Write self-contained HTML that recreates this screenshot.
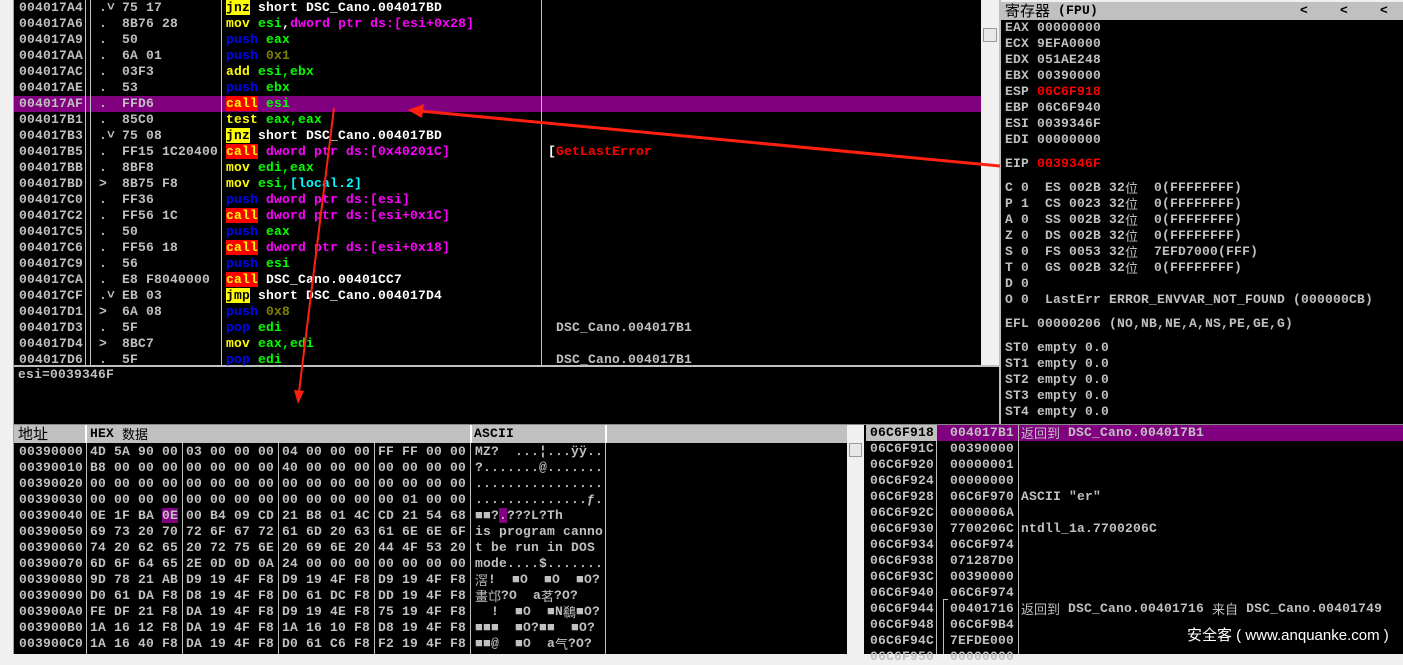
<!DOCTYPE html>
<html><head><meta charset="utf-8"><style>
*{margin:0;padding:0;box-sizing:border-box}
body{width:1403px;height:654px;overflow:hidden;background:#f0f0f0;position:relative;font-family:"Liberation Mono","Noto Sans CJK SC",monospace;font-size:13px;font-weight:bold;letter-spacing:0.2px;color:#c0c0c0}
.a{position:absolute}
.t{position:absolute;height:16px;line-height:16px;white-space:pre}
.blk{position:absolute;background:#000}
.vl{position:absolute;width:1px;background:#c0c0c0}
.y{color:#ffff00}.g{color:#00ff00}.m{color:#ff00ff}.b{color:#0000ff}.o{color:#808000}.w{color:#fff}.c{color:#00ffff}.r{color:#ff0000}
.yb{background:#ffff00;color:#000}.rb{background:#ff0000;color:#ffff00}
.hd{position:absolute;background:#c0c0c0;color:#000;height:18px;line-height:18px;white-space:pre}
.cj{font-family:"Noto Sans CJK SC","WenQuanYi Zen Hei",sans-serif;font-weight:normal;letter-spacing:0;line-height:16px;display:inline-block;height:16px;vertical-align:top}
</style></head><body>
<div class="a" style="left:13px;top:0;width:1px;height:654px;background:#a0a0a0"></div>
<div class="blk" style="left:14px;top:0;width:967px;height:365px"></div>
<div class="a" style="left:14px;top:96px;width:967px;height:16px;background:#800080"></div>
<div class="vl" style="left:85px;top:0;height:365px"></div>
<div class="vl" style="left:90px;top:0;height:365px"></div>
<div class="vl" style="left:221px;top:0;height:365px"></div>
<div class="vl" style="left:541px;top:0;height:365px"></div>
<div class="a" style="left:981px;top:0;width:18px;height:365px;background:#f0f0f0"></div>
<div class="a" style="left:983px;top:28px;width:14px;height:14px;background:#e8e8e8;border:1px solid #999"></div>
<div class="a" style="left:14px;top:365px;width:985px;height:2px;background:#c0c0c0"></div>
<div id="dis"></div>
<div class="blk" style="left:14px;top:367px;width:985px;height:57px"></div>
<div class="t" style="left:18px;top:367px">esi=0039346F</div>
<div class="a" style="left:999px;top:0;width:2px;height:424px;background:#c0c0c0"></div>
<div class="blk" style="left:1001px;top:19px;width:402px;height:405px"></div>
<div class="hd" style="left:1001px;top:2px;width:402px;padding-left:4px"><span class="cj" style="font-size:15px;height:18px;line-height:18px">寄存器</span> (FPU)</div>
<div class="t" style="left:1300px;top:3px;color:#000">&lt;</div>
<div class="t" style="left:1340px;top:3px;color:#000">&lt;</div>
<div class="t" style="left:1380px;top:3px;color:#000">&lt;</div>
<div id="reg"></div>
<div class="a" style="left:14px;top:424px;width:1389px;height:1px;background:#888"></div>
<div class="hd" style="left:14px;top:425px;width:833px"></div>
<div class="t" style="left:18px;top:426px;color:#000;height:18px"><span class="cj" style="font-size:15px">地址</span></div>
<div class="t" style="left:90px;top:426px;color:#000">HEX <span class="cj">数据</span></div>
<div class="t" style="left:474px;top:426px;color:#000">ASCII</div>
<div class="a" style="left:85px;top:425px;width:2px;height:18px;background:#fff"></div>
<div class="a" style="left:470px;top:425px;width:2px;height:18px;background:#fff"></div>
<div class="a" style="left:605px;top:425px;width:2px;height:18px;background:#fff"></div>
<div class="blk" style="left:14px;top:443px;width:833px;height:211px"></div>
<div class="vl" style="left:86px;top:443px;height:211px"></div>
<div class="vl" style="left:182px;top:443px;height:211px"></div>
<div class="vl" style="left:278px;top:443px;height:211px"></div>
<div class="vl" style="left:374px;top:443px;height:211px"></div>
<div class="vl" style="left:470px;top:443px;height:211px"></div>
<div class="vl" style="left:605px;top:443px;height:211px"></div>
<div id="dump"></div>
<div class="a" style="left:847px;top:425px;width:17px;height:229px;background:#f0f0f0"></div>
<div class="a" style="left:849px;top:443px;width:13px;height:14px;background:#e8e8e8;border:1px solid #999"></div>
<div class="blk" style="left:864px;top:425px;width:539px;height:229px"></div>
<div class="a" style="left:866px;top:425px;width:70px;height:16px;background:#c0c0c0"></div>
<div class="a" style="left:937px;top:425px;width:466px;height:16px;background:#800080"></div>
<div class="vl" style="left:936px;top:425px;height:229px"></div>
<div class="vl" style="left:1018px;top:425px;height:229px"></div>
<div class="vl" style="left:943px;top:599px;height:55px;background:#c0c0c0"></div>
<div class="a" style="left:943px;top:599px;width:5px;height:1px;background:#c0c0c0"></div>
<div id="stk"></div>
<div class="a" style="left:1187px;top:624px;color:#fff;font-family:'Liberation Sans','Noto Sans CJK SC',sans-serif;font-weight:normal;font-size:15px;letter-spacing:0">安全客 ( www.anquanke.com )</div>
<svg class="a" style="left:0;top:0" width="1403" height="654">
<line x1="334" y1="108" x2="299" y2="392" stroke="#ff2010" stroke-width="2"/>
<polygon points="294,390 304,391 298,404" fill="#ff2010"/>
<line x1="1000" y1="166" x2="420" y2="111" stroke="#ff2010" stroke-width="3"/>
<polygon points="408,110 424,104 422,118" fill="#ff2010"/>
</svg>
<script>
function T(x,y,h,extra){return '<div class="t" style="left:'+x+'px;top:'+y+'px'+(extra||'')+'">'+h+'</div>';}
var D=[
["004017A4",".˅","75 17",'<span class="yb">jnz</span><span class="w"> short DSC_Cano.004017BD</span>',""],
["004017A6",".","8B76 28",'<span class="y">mov</span> <span class="g">esi</span><span class="w">,</span><span class="m">dword ptr ds:[esi+0x28]</span>',""],
["004017A9",".","50",'<span class="b">push</span> <span class="g">eax</span>',""],
["004017AA",".","6A 01",'<span class="b">push</span> <span class="o">0x1</span>',""],
["004017AC",".","03F3",'<span class="y">add</span> <span class="g">esi,ebx</span>',""],
["004017AE",".","53",'<span class="b">push</span> <span class="g">ebx</span>',""],
["004017AF",".","FFD6",'<span class="rb">call</span> <span class="g">esi</span>',""],
["004017B1",".","85C0",'<span class="y">test</span> <span class="g">eax,eax</span>',""],
["004017B3",".˅","75 08",'<span class="yb">jnz</span><span class="w"> short DSC_Cano.004017BD</span>',""],
["004017B5",".","FF15 1C20400",'<span class="rb">call</span> <span class="m">dword ptr ds:[0x40201C]</span>','<span class="w">[</span><span class="r">GetLastError</span>'],
["004017BB",".","8BF8",'<span class="y">mov</span> <span class="g">edi,eax</span>',""],
["004017BD",">","8B75 F8",'<span class="y">mov</span> <span class="g">esi,</span><span class="c">[local.2]</span>',""],
["004017C0",".","FF36",'<span class="b">push</span> <span class="m">dword ptr ds:[esi]</span>',""],
["004017C2",".","FF56 1C",'<span class="rb">call</span> <span class="m">dword ptr ds:[esi+0x1C]</span>',""],
["004017C5",".","50",'<span class="b">push</span> <span class="g">eax</span>',""],
["004017C6",".","FF56 18",'<span class="rb">call</span> <span class="m">dword ptr ds:[esi+0x18]</span>',""],
["004017C9",".","56",'<span class="b">push</span> <span class="g">esi</span>',""],
["004017CA",".","E8 F8040000",'<span class="rb">call</span> <span class="w">DSC_Cano.00401CC7</span>',""],
["004017CF",".˅","EB 03",'<span class="yb">jmp</span><span class="w"> short DSC_Cano.004017D4</span>',""],
["004017D1",">","6A 08",'<span class="b">push</span> <span class="o">0x8</span>',""],
["004017D3",".","5F",'<span class="b">pop</span> <span class="g">edi</span>',' DSC_Cano.004017B1'],
["004017D4",">","8BC7",'<span class="y">mov</span> <span class="g">eax,edi</span>',""],
["004017D6",".","5F",'<span class="b">pop</span> <span class="g">edi</span>',' DSC_Cano.004017B1']];
var h='';D.forEach(function(r,i){var y=i*16;h+=T(19,y,r[0])+T(99,y,r[1])+'<div class="t" style="left:122px;top:'+y+'px;width:99px;overflow:hidden">'+r[2]+'</div>'+T(226,y,r[3])+T(548,y,r[4]);});
document.getElementById('dis').innerHTML=h;
var R=[[28,'EAX 00000000'],[44,'ECX 9EFA0000'],[60,'EDX 051AE248'],[76,'EBX 00390000'],[92,'ESP <span class="r">06C6F918</span>'],[108,'EBP 06C6F940'],[124,'ESI 0039346F'],[140,'EDI 00000000'],[164,'EIP <span class="r">0039346F</span>'],
[188,'C 0  ES 002B 32<span class="cj">位</span>  0(FFFFFFFF)'],[204,'P 1  CS 0023 32<span class="cj">位</span>  0(FFFFFFFF)'],[220,'A 0  SS 002B 32<span class="cj">位</span>  0(FFFFFFFF)'],[236,'Z 0  DS 002B 32<span class="cj">位</span>  0(FFFFFFFF)'],[252,'S 0  FS 0053 32<span class="cj">位</span>  7EFD7000(FFF)'],[268,'T 0  GS 002B 32<span class="cj">位</span>  0(FFFFFFFF)'],[284,'D 0'],[300,'O 0  LastErr ERROR_ENVVAR_NOT_FOUND (000000CB)'],[324,'EFL 00000206 (NO,NB,NE,A,NS,PE,GE,G)'],[348,'ST0 empty 0.0'],[364,'ST1 empty 0.0'],[380,'ST2 empty 0.0'],[396,'ST3 empty 0.0'],[412,'ST4 empty 0.0']];
h='';R.forEach(function(r){h+=T(1005,r[0]-8,r[1]);});document.getElementById('reg').innerHTML=h;
var M=[["00390000","4D 5A 90 00","03 00 00 00","04 00 00 00","FF FF 00 00","MZ?  ...¦...ÿÿ.."],
["00390010","B8 00 00 00","00 00 00 00","40 00 00 00","00 00 00 00","?.......@......."],
["00390020","00 00 00 00","00 00 00 00","00 00 00 00","00 00 00 00","................"],
["00390030","00 00 00 00","00 00 00 00","00 00 00 00","00 01 00 00","..............ƒ."],
["00390040",'0E 1F BA <span style="background:#800080">0E</span>',"00 B4 09 CD","21 B8 01 4C","CD 21 54 68",'■■?<span style="background:#800080">.</span>???L?Th'],
["00390050","69 73 20 70","72 6F 67 72","61 6D 20 63","61 6E 6E 6F","is program canno"],
["00390060","74 20 62 65","20 72 75 6E","20 69 6E 20","44 4F 53 20","t be run in DOS "],
["00390070","6D 6F 64 65","2E 0D 0D 0A","24 00 00 00","00 00 00 00","mode....$......."],
["00390080","9D 78 21 AB","D9 19 4F F8","D9 19 4F F8","D9 19 4F F8",'<span class="cj">滘</span>!  ■O  ■O  ■O?'],
["00390090","D0 61 DA F8","D8 19 4F F8","D0 61 DC F8","DD 19 4F F8",'<span class="cj">畫邙</span>?O  a<span class="cj">茗</span>?O?'],
["003900A0","FE DF 21 F8","DA 19 4F F8","D9 19 4E F8","75 19 4F F8",'  !  ■O  ■N<span class="cj">鵗</span>■O?'],
["003900B0","1A 16 12 F8","DA 19 4F F8","1A 16 10 F8","D8 19 4F F8","■■■  ■O?■■  ■O?"],
["003900C0","1A 16 40 F8","DA 19 4F F8","D0 61 C6 F8","F2 19 4F F8",'■■@  ■O  a<span class="cj">气</span>?O?']];
h='';M.forEach(function(r,i){var y=444+i*16;h+=T(19,y,r[0])+T(90,y,r[1])+T(186,y,r[2])+T(282,y,r[3])+T(378,y,r[4])+'<div class="t" style="left:475px;top:'+y+'px;width:130px;overflow:hidden">'+r[5]+'</div>';});
document.getElementById('dump').innerHTML=h;
var S=[["06C6F918","004017B1",'<span class="cj">返回到</span> DSC_Cano.004017B1'],["06C6F91C","00390000",""],["06C6F920","00000001",""],["06C6F924","00000000",""],["06C6F928","06C6F970",'ASCII "er"'],["06C6F92C","0000006A",""],["06C6F930","7700206C","ntdll_1a.7700206C"],["06C6F934","06C6F974",""],["06C6F938","071287D0",""],["06C6F93C","00390000",""],["06C6F940","06C6F974",""],["06C6F944","00401716",'<span class="cj">返回到</span> DSC_Cano.00401716 <span class="cj">来自</span> DSC_Cano.00401749'],["06C6F948","06C6F9B4",""],["06C6F94C","7EFDE000",""],["06C6F950","00000000",""]];
h='';S.forEach(function(r,i){var y=425+i*16;h+=T(870,y,r[0],i==0?';color:#000':'')+T(950,y,r[1])+T(1021,y,r[2]);});
document.getElementById('stk').innerHTML=h;
</script>
</body></html>
